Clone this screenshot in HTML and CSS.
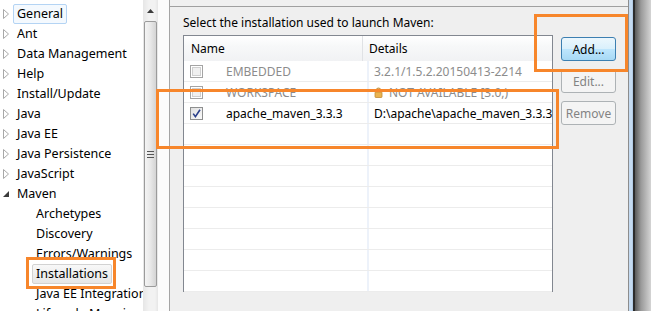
FILE: index.html
```html
<!DOCTYPE html>
<html lang="en">

<head>
    <meta charset="UTF-8" />
    <title>Preferences - Maven Installations</title>
    <link rel="stylesheet" href="styles.css">
</head>

<body>
    <div class="window">
        <!-- Tree + scrollbar -->
        <div class="tree-pane">
            <div class="tree">
                <div class="node"><span class="exp"><svg width="6" height="10"><polygon points="0.5,0.5 5.5,5 0.5,9.5" fill="#fff" stroke="#a8a8a8"/></svg></span><span class="label focus">General</span></div>
                <div class="node"><span class="exp"><svg width="6" height="10"><polygon points="0.5,0.5 5.5,5 0.5,9.5" fill="#fff" stroke="#a8a8a8"/></svg></span><span class="label">Ant</span></div>
                <div class="node"><span class="exp"><svg width="6" height="10"><polygon points="0.5,0.5 5.5,5 0.5,9.5" fill="#fff" stroke="#a8a8a8"/></svg></span><span class="label">Data Management</span></div>
                <div class="node"><span class="exp"><svg width="6" height="10"><polygon points="0.5,0.5 5.5,5 0.5,9.5" fill="#fff" stroke="#a8a8a8"/></svg></span><span class="label">Help</span></div>
                <div class="node"><span class="exp"><svg width="6" height="10"><polygon points="0.5,0.5 5.5,5 0.5,9.5" fill="#fff" stroke="#a8a8a8"/></svg></span><span class="label">Install/Update</span></div>
                <div class="node"><span class="exp"><svg width="6" height="10"><polygon points="0.5,0.5 5.5,5 0.5,9.5" fill="#fff" stroke="#a8a8a8"/></svg></span><span class="label">Java</span></div>
                <div class="node"><span class="exp"><svg width="6" height="10"><polygon points="0.5,0.5 5.5,5 0.5,9.5" fill="#fff" stroke="#a8a8a8"/></svg></span><span class="label">Java EE</span></div>
                <div class="node"><span class="exp"><svg width="6" height="10"><polygon points="0.5,0.5 5.5,5 0.5,9.5" fill="#fff" stroke="#a8a8a8"/></svg></span><span class="label">Java Persistence</span></div>
                <div class="node"><span class="exp"><svg width="6" height="10"><polygon points="0.5,0.5 5.5,5 0.5,9.5" fill="#fff" stroke="#a8a8a8"/></svg></span><span class="label">JavaScript</span></div>
                <div class="node"><span class="exp"><svg width="7" height="10"><polygon points="6,2 6,8 0,8" fill="#3c3c3c"/></svg></span><span class="label">Maven</span></div>
                <div class="node child"><span class="label">Archetypes</span></div>
                <div class="node child"><span class="label">Discovery</span></div>
                <div class="node child"><span class="label">Errors/Warnings</span></div>
                <div class="node child"><span class="label selected">Installations</span></div>
                <div class="node child"><span class="label">Java EE Integration</span></div>
                <div class="node child"><span class="label">Lifecycle Mappings</span></div>
            </div>
            <div class="scrollbar">
                <div class="arrow"><svg width="7" height="4"><polygon points="0,4 3.5,0 7,4" fill="#3c3c3c"/></svg></div>
                <div class="thumb"><div class="grip"></div></div>
            </div>
        </div>

        <div class="sash"></div>

        <!-- Preference page -->
        <div class="page">
            <div class="page-top"></div>
            <div class="page-body">
                <div class="intro">Select the installation used to launch Maven:</div>
                <div class="content">
                    <div class="grid">
                        <div class="row head">
                            <div class="cell name">Name</div>
                            <div class="cell details">Details</div>
                        </div>
                        <div class="row disabled">
                            <div class="cell name"><span class="check off"></span>EMBEDDED</div>
                            <div class="cell details">3.2.1/1.5.2.20150413-2214</div>
                        </div>
                        <div class="row disabled">
                            <div class="cell name"><span class="check off"></span>WORKSPACE</div>
                            <div class="cell details"><svg class="lock" width="9" height="11"><path d="M2.5 5V3.2a2 2 0 0 1 4 0V5" fill="none" stroke="#c89a4a" stroke-width="1.2"/><rect x="1" y="5" width="7" height="5.5" rx="0.8" fill="#eab34f" stroke="#c08a35" stroke-width="0.8"/></svg>NOT AVAILABLE [3.0,)</div>
                        </div>
                        <div class="row">
                            <div class="cell name"><span class="check on"><svg width="11" height="11"><path d="M2.2 5.6 L4.4 8.6 L9 1.8" fill="none" stroke="#2a3f8a" stroke-width="1.6"/></svg></span>apache_maven_3.3.3</div>
                            <div class="cell details">D:\apache\apache_maven_3.3.3</div>
                        </div>
                        <div class="row"><div class="cell name"></div><div class="cell details"></div></div>
                        <div class="row"><div class="cell name"></div><div class="cell details"></div></div>
                        <div class="row"><div class="cell name"></div><div class="cell details"></div></div>
                        <div class="row"><div class="cell name"></div><div class="cell details"></div></div>
                        <div class="row"><div class="cell name"></div><div class="cell details"></div></div>
                        <div class="row"><div class="cell name"></div><div class="cell details"></div></div>
                        <div class="row"><div class="cell name"></div><div class="cell details"></div></div>
                        <div class="row"><div class="cell name"></div><div class="cell details"></div></div>
                    </div>
                    <div class="buttons">
                        <div class="btn default">Add...</div>
                        <div class="btn off">Edit...</div>
                        <div class="btn off">Remove</div>
                    </div>
                </div>
            </div>
        </div>

        <div class="frame-edge"></div>

        <!-- Annotation boxes -->
        <div class="mark mark-add"></div>
        <div class="mark mark-row"></div>
        <div class="mark mark-tree"></div>
    </div>
</body>

</html>
```

FILE: styles.css
```css
body {
    margin: 0;
    background: #fff;
    font-family: 'Noto Sans', 'DejaVu Sans', sans-serif;
    color: #000;
}

.window {
    position: relative;
    display: flex;
    width: 652px;
    height: 311px;
    overflow: hidden;
}

/* ---- tree ---- */
.tree-pane {
    display: flex;
    width: 158px;
    background: #fff;
}

.tree {
    width: 143px;
    padding-top: 4px;
    font-size: 12.5px;
    white-space: nowrap;
    overflow: hidden;
}

.node {
    display: flex;
    align-items: center;
    height: 20px;
    padding-left: 3px;
}

.node.child {
    padding-left: 32px;
}

.exp {
    display: flex;
    align-items: center;
    width: 10px;
}

.label {
    height: 18px;
    line-height: 18px;
    padding: 0 3px;
    border: 1px solid transparent;
    border-radius: 2px;
}

.label.focus {
    border-color: #b4d4f4;
    background: #f4f9fe;
}

.label.selected {
    border-color: #d2d2d2;
    background: linear-gradient(#f8f8f8, #e6e6e6);
}

.scrollbar {
    width: 15px;
    background: linear-gradient(to right, #e6e6e6, #f2f2f2 40%, #f2f2f2 80%, #e6e6e6);
    display: flex;
    flex-direction: column;
    align-items: center;
}

.arrow {
    height: 21px;
    display: flex;
    align-items: center;
    justify-content: center;
    width: 100%;
}

.thumb {
    width: 13px;
    height: 266px;
    border: 1px solid #9b9b9b;
    border-radius: 2px;
    box-sizing: border-box;
    background: linear-gradient(to right, #f4f4f4, #e8e8e8 50%, #d4d4d4);
    display: flex;
    align-items: center;
    justify-content: center;
}

.grip {
    width: 7px;
    height: 7px;
    background: repeating-linear-gradient(#555 0 1px, transparent 1px 3px);
}

.sash {
    width: 11px;
    background: #fcfcfc;
    border-right: 1px solid #a5a5a5;
}

/* ---- preference page ---- */
.page {
    width: 458px;
    background: #efefef;
    display: flex;
    flex-direction: column;
}

.page-top {
    height: 6px;
    border-bottom: 1px solid #a0a0a0;
    background: #f0f0f0;
}

.page-body {
    padding: 8px 13px 0 13px;
    font-size: 12px;
}

.intro {
    height: 20px;
    line-height: 16px;
    color: #000;
}

.content {
    display: flex;
    align-items: flex-start;
}

.grid {
    width: 370px;
    box-sizing: border-box;
    border: 1px solid #828790;
    border-bottom: none;
    background: #fff;
}

.row {
    display: flex;
    height: 20px;
    border-bottom: 1px solid #ececec;
}

.row.head {
    height: 25px;
    border-bottom: none;
    background: linear-gradient(#fff, #f7f8f9 40%, #f1f2f4);
}

.cell {
    display: flex;
    align-items: center;
    white-space: nowrap;
    overflow: hidden;
}

.cell.name {
    width: 177px;
    padding-left: 6px;
    border-right: 2px solid #edf2fa;
}

.cell.details {
    flex: 1;
    padding-left: 5px;
}

.head .cell.name {
    padding-left: 7px;
    border-right: 1px solid #e0e2e5;
    width: 171px;
}

.head .cell.details {
    padding-left: 6px;
}

.disabled .cell {
    color: #8c8c8c;
}

.check {
    width: 13px;
    height: 13px;
    box-sizing: border-box;
    margin-right: 23px;
    flex-shrink: 0;
    display: flex;
    align-items: center;
    justify-content: center;
}

.check.off {
    border: 1px solid #a4a4a4;
    background: #f0f0f0;
    box-shadow: inset 0 0 0 1px #fff, inset 0 0 0 2px #cfcfcf;
}

.check.on {
    border: 1px solid #8e8f8f;
    background: linear-gradient(135deg, #e0e0e0, #fafafa);
}

.lock {
    margin-right: 6px;
}

.buttons {
    display: flex;
    flex-direction: column;
    gap: 8px;
    margin: 2px 0 0 8px;
}

.btn {
    width: 55px;
    height: 24px;
    box-sizing: border-box;
    border-radius: 3px;
    display: flex;
    align-items: center;
    justify-content: center;
    font-size: 12px;
}

.btn.default {
    border: 1px solid #3c7fb1;
    background: linear-gradient(#ecf7fd, #d9f0fc 50%, #bee6fd 50%, #a7d9f5);
    color: #000;
}

.btn.off {
    border: 1px solid #adb2b5;
    background: #f4f4f4;
    color: #838383;
}

.frame-edge {
    width: 23px;
    background: linear-gradient(to right, #8d8d8d 0 1px, #c5dbf2 1px 4px, #b3cbe5 4px 5px, #2c2c2c 5px 7px, #5a5a5a 7px, #9a9a9a 13px, #d4d4d4 23px);
}

/* ---- orange annotations ---- */
.mark {
    position: absolute;
    border: 3px solid #f7862b;
    box-sizing: border-box;
}

.mark-add {
    left: 534px;
    top: 14px;
    width: 94px;
    height: 58px;
}

.mark-row {
    left: 156px;
    top: 89px;
    width: 403px;
    height: 60px;
}

.mark-tree {
    left: 26px;
    top: 257px;
    width: 90px;
    height: 32px;
}
```
